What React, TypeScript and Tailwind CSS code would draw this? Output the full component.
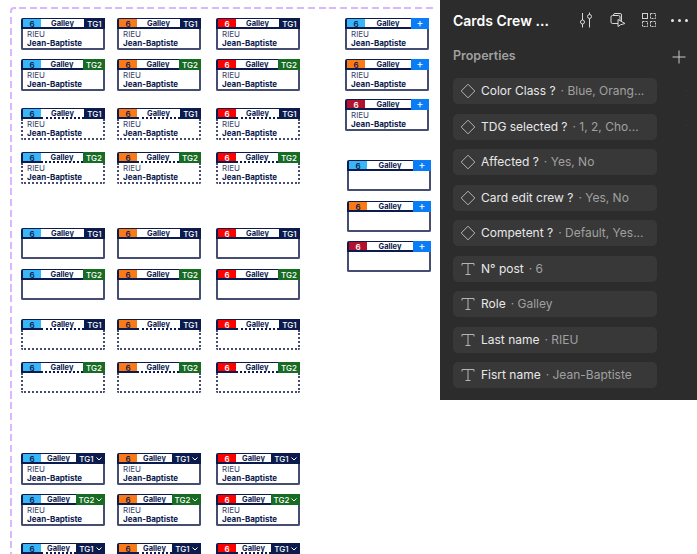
import React from "react";

type Kind = "blue" | "orange" | "red" | "crimson";
const kindClass: Record<Kind, string> = {
  blue: "bg-[#38b6f7] text-[#0b1b4d]",
  orange: "bg-[#fb7a18] text-[#0b1b4d]",
  red: "bg-[#ff0000] text-white",
  crimson: "bg-[#b3122e] text-white",
};

type CardProps = {
  x: number;
  y: number;
  kind: Kind;
  tag: "TG1" | "TG2" | "+" | "TG1v" | "TG2v";
  dotted?: boolean;
  empty?: boolean;
};

function Card({ x, y, kind, tag, dotted, empty }: CardProps) {
  const green = tag.startsWith("TG2");
  const chev = tag.endsWith("v");
  const label = chev ? tag.slice(0, 3) : tag;
  const tagClass =
    tag === "+"
      ? "w-[18px] bg-[#0a7cf5] text-[11px] font-normal"
      : chev
        ? `w-[29px] ${green ? "bg-[#176b22]" : "bg-[#0b1b4d]"}`
        : green
          ? "w-[22px] bg-[#176b22]"
          : "w-[21px] bg-[#0b1b4d]";
  return (
    <div
      className="absolute w-[84px] h-[31px] flex flex-col bg-white font-['Inter',sans-serif]"
      style={{ left: x, top: y }}
    >
      <div className="relative h-[11px] flex bg-[#0b1b4d] pt-px pl-[2px] pb-[2px] rounded-t-[2px] shrink-0">
        <div className={`w-[18px] flex items-center justify-center pt-px text-[8px] font-semibold leading-none ${kindClass[kind]}`}>6</div>
        <div
          className={`flex-1 bg-white flex items-center justify-center text-[7.5px] font-bold text-[#0b1b4d] leading-none ${
            dotted ? "-mb-[2px] border-b-2 border-dotted border-[#0b1b4d] pt-[2px]" : "pt-px"
          }`}
        >
          Galley
        </div>
        <div className={`flex items-center justify-center gap-[2px] -mt-px -mb-[2px] text-[8px] font-medium leading-none text-white ${tagClass}`}>
          {label}
          {chev && (
            <svg width="6" height="4" viewBox="0 0 6 4" fill="none" stroke="white" strokeWidth="1">
              <path d="M0.5 0.5 3 3 5.5 0.5" />
            </svg>
          )}
        </div>
      </div>
      <div
        className={`flex-1 border-x-2 border-b-2 rounded-b-[2px] pl-[4px] pt-px flex flex-col border-[#464d72] ${
          dotted ? "border-dotted" : "border-solid"
        }`}
      >
        {!empty && (
          <>
            <div className="text-[8px] leading-[9px] text-[#3a4468] whitespace-nowrap">RIEU</div>
            <div className="text-[8px] leading-[9px] font-bold text-[#0b1b4d] whitespace-nowrap">Jean-Baptiste</div>
          </>
        )}
      </div>
    </div>
  );
}

const cols: { x: number; kind: Kind }[] = [
  { x: 21, kind: "blue" },
  { x: 117, kind: "orange" },
  { x: 216, kind: "red" },
];

const rows: Omit<CardProps, "x" | "kind">[] = [
  { y: 18, tag: "TG1" },
  { y: 59, tag: "TG2" },
  { y: 108, tag: "TG1", dotted: true },
  { y: 152, tag: "TG2", dotted: true },
  { y: 228, tag: "TG1", empty: true },
  { y: 269, tag: "TG2", empty: true },
  { y: 319, tag: "TG1", dotted: true, empty: true },
  { y: 362, tag: "TG2", dotted: true, empty: true },
  { y: 453, tag: "TG1v" },
  { y: 494, tag: "TG2v" },
  { y: 543, tag: "TG1v", dotted: true },
];

const extras: CardProps[] = [
  { x: 345, y: 18, kind: "blue", tag: "+" },
  { x: 345, y: 59, kind: "orange", tag: "+" },
  { x: 345, y: 99, kind: "crimson", tag: "+" },
  { x: 347, y: 160, kind: "blue", tag: "+", empty: true },
  { x: 347, y: 201, kind: "orange", tag: "+", empty: true },
  { x: 347, y: 241, kind: "crimson", tag: "+", empty: true },
];

const props: { icon: "d" | "t"; name: string; value: string }[] = [
  { icon: "d", name: "Color Class ?", value: "Blue, Orang..." },
  { icon: "d", name: "TDG selected ?", value: "1, 2, Cho..." },
  { icon: "d", name: "Affected ?", value: "Yes, No" },
  { icon: "d", name: "Card edit crew ?", value: "Yes, No" },
  { icon: "d", name: "Competent ?", value: "Default, Yes..." },
  { icon: "t", name: "N° post", value: "6" },
  { icon: "t", name: "Role", value: "Galley" },
  { icon: "t", name: "Last name", value: "RIEU" },
  { icon: "t", name: "Fisrt name", value: "Jean-Baptiste" },
];

function PropIcon({ kind }: { kind: "d" | "t" }) {
  return kind === "d" ? (
    <svg width="16" height="16" viewBox="0 0 16 16" fill="none" stroke="#b5b5b5" strokeWidth="1">
      <path d="M8 1.2 14.8 8 8 14.8 1.2 8Z" />
    </svg>
  ) : (
    <svg width="16" height="16" viewBox="0 0 16 16" fill="none" stroke="#b5b5b5" strokeWidth="1">
      <path d="M2 4.5V2.5H14V4.5M8 2.5V13.5M5.5 13.5H10.5" />
    </svg>
  );
}

function Panel() {
  return (
    <div className="absolute left-[440px] top-0 w-[257px] h-[400px] bg-[#2c2c2c] pl-[13px] font-['Inter',sans-serif]">
      <div className="h-[40px] flex items-center">
        <div className="text-[14px] font-semibold text-white w-[126px] whitespace-nowrap">Cards Crew ...</div>
        <svg width="16" height="16" viewBox="0 0 16 16" fill="none" stroke="#d8d8d8">
          <path d="M3.5 1V8M3.5 12V15.5M10.5 0.5V2.5M10.5 6.5V15.5" />
          <circle cx="3.5" cy="10" r="2" />
          <circle cx="10.5" cy="4.5" r="2" />
        </svg>
        <svg width="16" height="16" viewBox="0 0 16 16" fill="none" stroke="#d8d8d8" className="ml-[15px]">
          <rect x="3.5" y="1.5" width="8" height="8" rx="1.5" />
          <rect x="1" y="3.5" width="9" height="8" rx="1.5" fill="#2c2c2c" />
          <path d="M8 7.5V14.5L10.5 12.8 15 11.5Z" fill="#2c2c2c" />
        </svg>
        <svg width="14" height="14" viewBox="0 0 14 14" fill="none" stroke="#d0d0d0" className="ml-[16px]">
          <rect x="0.5" y="0.5" width="5" height="5" />
          <rect x="8.5" y="0.5" width="5" height="5" strokeDasharray="2 1" />
          <rect x="0.5" y="8.5" width="5" height="5" strokeDasharray="2 1" />
          <rect x="8.5" y="8.5" width="5" height="5" strokeDasharray="2 1" />
        </svg>
        <div className="ml-[15px] flex gap-[4px]">
          <span className="w-[3px] h-[3px] rounded-full bg-[#e5e5e5]" />
          <span className="w-[3px] h-[3px] rounded-full bg-[#e5e5e5]" />
          <span className="w-[3px] h-[3px] rounded-full bg-[#e5e5e5]" />
        </div>
      </div>
      <div className="h-[31px] flex items-center justify-between pr-[11px] pt-[2px]">
        <span className="text-[12.5px] font-semibold text-[#a0a0a0]">Properties</span>
        <svg width="14" height="14" viewBox="0 0 14 14" stroke="#c8c8c8" fill="none">
          <path d="M7 0.5V13.5M0.5 7H13.5" />
        </svg>
      </div>
      <div className="mt-[7px] flex flex-col gap-[9.5px] w-[204px]">
        {props.map((p) => (
          <div key={p.name} className="h-[26px] rounded-[5px] bg-[#383838] flex items-center pl-[7px] text-[12px] whitespace-nowrap">
            <PropIcon kind={p.icon} />
            <span className="ml-[5px] text-[#e8e8e8]">{p.name}</span>
            <span className="ml-[5px] text-[#a0a0a0]">· {p.value}</span>
          </div>
        ))}
      </div>
      <span className="absolute left-[246px] top-[90px] w-px h-px bg-[#3c3c3c]" />
      <span className="absolute left-[246px] top-[125px] w-px h-px bg-[#3c3c3c]" />
    </div>
  );
}

export default function App() {
  return (
    <div className="relative w-[697px] h-[554px] overflow-hidden bg-white">
      <div className="absolute left-[10px] top-[7px] w-[6px] h-[6px] border-t-2 border-l-2 border-[#d8b8ff] rounded-tl-[4px]" />
      <div className="absolute left-[19px] top-[7px] w-[415px] h-[2px] bg-[repeating-linear-gradient(90deg,#d8b8ff_0,#d8b8ff_7px,transparent_7px,transparent_10.7px)]" />
      <div className="absolute left-[10px] top-[17px] w-[2px] h-[537px] bg-[repeating-linear-gradient(180deg,#d8b8ff_0,#d8b8ff_7px,transparent_7px,transparent_10.7px)]" />
      {rows.map((r) =>
        cols.map((c) => <Card key={`${r.y}-${c.x}`} x={c.x} kind={c.kind} {...r} />)
      )}
      {extras.map((e) => (
        <Card key={`${e.x}-${e.y}`} {...e} />
      ))}
      <Panel />
    </div>
  );
}
